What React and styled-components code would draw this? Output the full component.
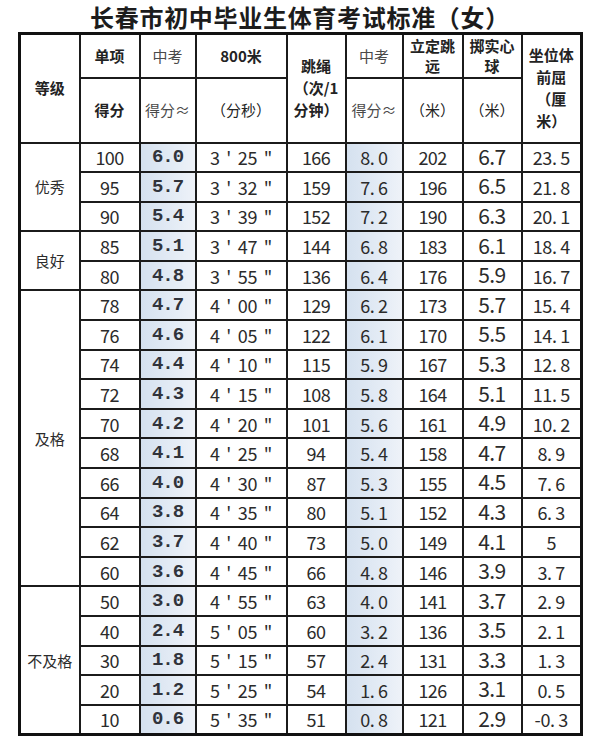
import React from 'react';
import styled, { createGlobalStyle } from 'styled-components';

const GlobalStyle = createGlobalStyle`
  body {
    margin: 0;
    background: #fff;
    font-family: "Noto Sans CJK SC", "Noto Sans", sans-serif;
  }
`;

// grade groups and their rows: score, mid-exam pts, 800m, rope, mid-exam pts, jump, ball, reach
const groups = [
  {
    name: '优秀',
    rows: [
      ['100', '6.0', "3 ' 25 \"", '166', '8.0', '202', '6.7', '23.5'],
      ['95', '5.7', "3 ' 32 \"", '159', '7.6', '196', '6.5', '21.8'],
      ['90', '5.4', "3 ' 39 \"", '152', '7.2', '190', '6.3', '20.1'],
    ],
  },
  {
    name: '良好',
    rows: [
      ['85', '5.1', "3 ' 47 \"", '144', '6.8', '183', '6.1', '18.4'],
      ['80', '4.8', "3 ' 55 \"", '136', '6.4', '176', '5.9', '16.7'],
    ],
  },
  {
    name: '及格',
    rows: [
      ['78', '4.7', "4 ' 00 \"", '129', '6.2', '173', '5.7', '15.4'],
      ['76', '4.6', "4 ' 05 \"", '122', '6.1', '170', '5.5', '14.1'],
      ['74', '4.4', "4 ' 10 \"", '115', '5.9', '167', '5.3', '12.8'],
      ['72', '4.3', "4 ' 15 \"", '108', '5.8', '164', '5.1', '11.5'],
      ['70', '4.2', "4 ' 20 \"", '101', '5.6', '161', '4.9', '10.2'],
      ['68', '4.1', "4 ' 25 \"", '94', '5.4', '158', '4.7', '8.9'],
      ['66', '4.0', "4 ' 30 \"", '87', '5.3', '155', '4.5', '7.6'],
      ['64', '3.8', "4 ' 35 \"", '80', '5.1', '152', '4.3', '6.3'],
      ['62', '3.7', "4 ' 40 \"", '73', '5.0', '149', '4.1', '5'],
      ['60', '3.6', "4 ' 45 \"", '66', '4.8', '146', '3.9', '3.7'],
    ],
  },
  {
    name: '不及格',
    rows: [
      ['50', '3.0', "4 ' 55 \"", '63', '4.0', '141', '3.7', '2.9'],
      ['40', '2.4', "5 ' 05 \"", '60', '3.2', '136', '3.5', '2.1'],
      ['30', '1.8', "5 ' 15 \"", '57', '2.4', '131', '3.3', '1.3'],
      ['20', '1.2', "5 ' 25 \"", '54', '1.6', '126', '3.1', '0.5'],
      ['10', '0.6', "5 ' 35 \"", '51', '0.8', '121', '2.9', '-0.3'],
    ],
  },
];

const widths = [60, 60, 56, 91, 59, 57, 60, 59, 60];

// column kinds: how each data column is drawn
const kinds = ['plain', 'mono', 'time', 'plain', 'spaced', 'plain', 'big', 'spaced'];

const spaceDot = (v) => v.replace('.', '. ');

const App = () => {
  return (
    <Page>
      <GlobalStyle />
      <Title>长春市初中毕业生体育考试标准（女）</Title>
      <Sheet>
        <colgroup>
          {widths.map((w, i) => (
            <col key={i} style={{ width: w }} />
          ))}
        </colgroup>
        <thead>
          <HeadRow $h={44}>
            <HeadCell rowSpan={2}>等级</HeadCell>
            <HeadCell>单项</HeadCell>
            <HeadCell $light>中考</HeadCell>
            <HeadCell>800米</HeadCell>
            <HeadCell rowSpan={2} $lh={22}>
              跳绳
              <br />
              （次/1
              <br />
              分钟）
            </HeadCell>
            <HeadCell $light>中考</HeadCell>
            <HeadCell>
              立定跳
              <br />
              远
            </HeadCell>
            <HeadCell>
              掷实心
              <br />
              球
            </HeadCell>
            <HeadCell rowSpan={2} $lh={22}>
              坐位体
              <br />
              前屈
              <br />
              （厘
              <br />
              米）
            </HeadCell>
          </HeadRow>
          <HeadRow $h={65}>
            <HeadCell>得分</HeadCell>
            <HeadCell $light>得分≈</HeadCell>
            <HeadCell $soft>（分秒）</HeadCell>
            <HeadCell $light>得分≈</HeadCell>
            <HeadCell $soft>（米）</HeadCell>
            <HeadCell $soft>（米）</HeadCell>
          </HeadRow>
        </thead>
        <tbody>
          {groups.map((g) =>
            g.rows.map((r, ri) => (
              <Row key={g.name + ri}>
                {ri === 0 && <GroupCell rowSpan={g.rows.length}>{g.name}</GroupCell>}
                {r.map((v, ci) => (
                  <Cell key={ci} $kind={kinds[ci]} $hl={ci === 1 || ci === 4}>
                    {kinds[ci] === 'spaced' ? spaceDot(v) : v}
                  </Cell>
                ))}
              </Row>
            ))
          )}
        </tbody>
      </Sheet>
    </Page>
  );
};

const Page = styled.div`
  width: 600px;
  height: 742px;
  overflow: hidden;
  background: #fff;
`;

const Title = styled.h1`
  margin: 0;
  height: 32px;
  line-height: 34px;
  text-align: center;
  font-size: 24px;
  font-weight: 700;
  letter-spacing: 0.7px;
  color: #1c1c1c;
`;

const Sheet = styled.table`
  margin-left: 18px;
  width: 562px;
  table-layout: fixed;
  border-collapse: collapse;
  border: 3px solid #111;
`;

const HeadRow = styled.tr`
  height: ${(p) => p.$h}px;
`;

const HeadCell = styled.th`
  border: 2px solid #1b1b1b;
  padding: 0 2px;
  font-size: 15px;
  line-height: ${(p) => p.$lh || 20}px;
  font-weight: ${(p) => (p.$light || p.$soft ? 400 : 700)};
  color: ${(p) => (p.$light ? '#4a4a4a' : '#232323')};
  text-align: center;
  vertical-align: middle;
`;

const Row = styled.tr`
  height: 29.6px;
`;

const GroupCell = styled.td`
  border: 2px solid #1b1b1b;
  padding: 0;
  text-align: center;
  font-size: 15px;
  color: #2c2c2c;
`;

const kindFont = {
  plain: `font-size: 18px; letter-spacing: -0.6px;`,
  time: `font-size: 18px; letter-spacing: -0.3px; word-spacing: 3px;`,
  spaced: `font-size: 18px; letter-spacing: -0.4px;`,
  mono: `font-family: "Liberation Mono", monospace; font-weight: 700; font-size: 19px; letter-spacing: -1px; color: #30333b;`,
  big: `font-size: 21px; letter-spacing: -0.6px; line-height: 22px; padding-bottom: 3px;`,
};

const Cell = styled.td`
  border: 2px solid #1b1b1b;
  padding: 0;
  text-align: center;
  white-space: pre;
  color: #2b2b2b;
  line-height: 20px;
  background: ${(p) => (p.$hl ? 'linear-gradient(90deg, #d5e1ef 0%, #e6edf6 70%, #eef2f8 100%)' : '#fff')};
  ${(p) => kindFont[p.$kind]}
`;

export default App;
